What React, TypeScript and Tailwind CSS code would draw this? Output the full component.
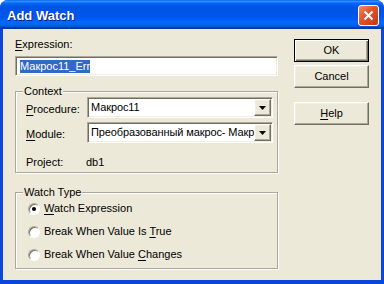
import { ReactNode } from 'react';

const sunken =
  'border border-t-[#ACA899] border-l-[#ACA899] border-r-white border-b-white shadow-[inset_1px_1px_0_#716F64,inset_-1px_-1px_0_#F1EFE2] bg-white';
const raised =
  'border border-t-white border-l-white border-r-[#716F64] border-b-[#716F64] shadow-[inset_-1px_-1px_0_#ACA899,inset_1px_1px_0_#F1EFE2] bg-[#ECE9D8]';

function Mn({ children }: { children: ReactNode }) {
  return <span className="underline underline-offset-[2px]">{children}</span>;
}

function Group({ label, className, children }: { label: string; className: string; children: ReactNode }) {
  return (
    <div className={`relative border border-[#ACA899] shadow-[inset_1px_1px_0_#fff,1px_1px_0_#fff] ${className}`}>
      <span className="absolute -top-[7px] left-[7px] px-[1px] bg-[#ECE9D8]">{label}</span>
      {children}
    </div>
  );
}

function Combo({ value }: { value: string }) {
  return (
    <div className={`${sunken} w-[186px] h-[21px] flex items-center p-[1px]`}>
      <span className="flex-1 overflow-hidden whitespace-nowrap pl-[2px] tracking-[-0.1px]">{value}</span>
      <span className={`${raised} w-[17px] h-[17px] flex items-center justify-center shrink-0`}>
        <svg width="7" height="4" viewBox="0 0 7 4">
          <path d="M0 0h7L3.5 4z" fill="#000" />
        </svg>
      </span>
    </div>
  );
}

function Radio({ checked, children }: { checked?: boolean; children: ReactNode }) {
  return (
    <div className="flex items-center gap-[4px] h-[13px]">
      <span className="w-[12px] h-[12px] rounded-full border border-t-[#ACA899] border-l-[#ACA899] border-r-white border-b-white bg-white shadow-[inset_1px_1px_0_#716F64] flex items-center justify-center">
        {checked && <span className="w-[4px] h-[4px] rounded-full bg-black" />}
      </span>
      <span>{children}</span>
    </div>
  );
}

function Button({ children, isDefault }: { children: ReactNode; isDefault?: boolean }) {
  const cls = isDefault
    ? 'border border-black shadow-[inset_1px_1px_0_#fff,inset_-1px_-1px_0_#716F64,inset_-2px_-2px_0_#ACA899] bg-[#ECE9D8]'
    : raised;
  return <div className={`${cls} w-[75px] h-[23px] flex items-center justify-center`}>{children}</div>;
}

export default function App() {
  return (
    <div className="w-[384px] h-[284px] bg-white">
      <div className="w-[384px] h-[284px] rounded-t-[8px] overflow-hidden bg-[#0A45DC] flex flex-col font-['Liberation_Sans',Arial,sans-serif] text-[11px] leading-[13px] text-black">
        <div className="h-[29px] shrink-0 flex justify-between pl-[7px] pr-[5px] bg-[linear-gradient(180deg,#0058EE_0%,#3593FF_4%,#288EFF_6%,#127DFF_8%,#036FFC_10%,#0262EE_14%,#0057E5_20%,#0054E3_24%,#0055EB_56%,#005BF5_66%,#026AFE_76%,#0062EF_86%,#0052D6_92%,#0040AB_94%,#003092_100%)]">
          <span className="mt-[8px] text-white font-bold text-[13px] leading-[16px] text-shadow-[1px_1px_0_#0A1E80]">
            Add Watch
          </span>
          <span className="mt-[5px] w-[21px] h-[21px] rounded-[3px] border border-white bg-[linear-gradient(135deg,#F28A62_0%,#E2522A_45%,#C43A12_100%)] flex items-center justify-center">
            <svg width="11" height="11" viewBox="0 0 11 11">
              <path d="M1.5 1.5l8 8M9.5 1.5l-8 8" stroke="#fff" strokeWidth="2" />
            </svg>
          </span>
        </div>

        <div className="flex-1 mx-[3px] mb-[4px] bg-[#ECE9D8] flex pl-[12px]">
          <div className="w-[263px] flex flex-col pt-[9px]">
            <span>
              <Mn>E</Mn>xpression:
            </span>
            <div className={`${sunken} mt-[5px] h-[20px] flex items-center pl-[4px]`}>
              <span className="bg-[#316AC5] text-white">Макрос11_Err</span>
            </div>

            <Group label="Context" className="mt-[15px] h-[82px] pt-[5px] pl-[10px]">
              <div className="flex flex-col gap-[4px]">
                <div className="flex items-center h-[21px]">
                  <span className="w-[61px] mt-[4px]">
                    <Mn>P</Mn>rocedure:
                  </span>
                  <Combo value="Макрос11" />
                </div>
                <div className="flex items-center h-[21px]">
                  <span className="w-[61px] mt-[4px]">
                    <Mn>M</Mn>odule:
                  </span>
                  <Combo value="Преобразованный макрос- Макр" />
                </div>
                <div className="flex mt-[9px]">
                  <span className="w-[60px]">Project:</span>
                  <span>db1</span>
                </div>
              </div>
            </Group>

            <Group label="Watch Type" className="mt-[19px] h-[77px] pt-[9px] pl-[12px]">
              <div className="flex flex-col gap-[10px]">
                <Radio checked>
                  <Mn>W</Mn>atch Expression
                </Radio>
                <Radio>
                  Break When Value Is <Mn>T</Mn>rue
                </Radio>
                <Radio>
                  Break When Value <Mn>C</Mn>hanges
                </Radio>
              </div>
            </Group>
          </div>

          <div className="ml-[16px] pt-[10px] flex flex-col">
            <Button isDefault>OK</Button>
            <div className="mt-[3px]">
              <Button>Cancel</Button>
            </div>
            <div className="mt-[14px]">
              <Button>
                <Mn>H</Mn>elp
              </Button>
            </div>
          </div>
        </div>
      </div>
    </div>
  );
}
